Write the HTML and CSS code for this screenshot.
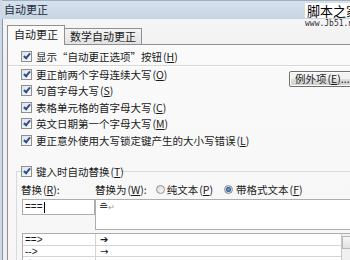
FILE: index.html
```html
<html>
	<head>
		<title>自动更正</title>
		<link rel="stylesheet" href="styles.css">
	</head>
	<body>
		<div class="frame">
			<div class="titlebar">
				<span class="title">自动更正</span>
				<div class="mark">
					<div class="mark_cn">脚本之家</div>
					<div class="mark_url">www.Jb51.net</div>
				</div>
			</div>

			<div class="client">
				<div class="tabs">
					<div class="tab active">自动更正</div>
					<div class="tab">数学自动更正</div>
				</div>

				<div class="panel">
					<div class="row first"><span class="cb"></span>显示“自动更正选项”按钮<span class="key">(<u>H</u>)</span></div>
					<div class="sep"></div>

					<div class="block">
						<div class="list">
							<div class="row"><span class="cb"></span>更正前两个字母连续大写<span class="key">(<u>O</u>)</span></div>
							<div class="row"><span class="cb"></span>句首字母大写<span class="key">(<u>S</u>)</span></div>
							<div class="row"><span class="cb"></span>表格单元格的首字母大写<span class="key">(<u>C</u>)</span></div>
							<div class="row"><span class="cb"></span>英文日期第一个字母大写<span class="key">(<u>M</u>)</span></div>
							<div class="row"><span class="cb"></span>更正意外使用大写锁定键产生的大小写错误<span class="key">(<u>L</u>)</span></div>
						</div>
						<div class="btn">例外项<span class="key">(<u>E</u>)...</span></div>
					</div>

					<div class="group">
						<div class="row legend"><span class="cb"></span>键入时自动替换<span class="key">(<u>T</u>)</span></div>

						<div class="labels">
							<span class="lab_from">替换<span class="key">(<u>R</u>)</span>:</span>
							<span>替换为<span class="key">(<u>W</u>)</span>:</span>
							<span class="radio"></span><span>纯文本<span class="key">(<u>P</u>)</span></span>
							<span class="radio on"></span><span>带格式文本<span class="key">(<u>F</u>)</span></span>
						</div>

						<div class="inputs">
							<div class="box_from">===<span class="caret"></span></div>
							<div class="box_to"><span class="sym">≘</span><span class="ret">↵</span></div>
						</div>

						<div class="table">
							<div class="cells">
								<div class="trow"><div class="c1">==&gt;</div><div class="c2 heavy">➔</div></div>
								<div class="trow"><div class="c1">--&gt;</div><div class="c2">→</div></div>
								<div class="trow"><div class="c1">&lt;--</div><div class="c2">←</div></div>
							</div>
							<div class="scroll"><div class="sbtn"></div></div>
						</div>
					</div>
				</div>
			</div>
		</div>
	</body>
</html>
```

FILE: styles.css
```css
/* dialog */
body {
	margin: 0;
	overflow: hidden;
	background-color: #f0f0f0;
	font-family: "Noto Sans CJK SC", "Liberation Sans", sans-serif;
	font-size: 10.5px;
	color: #1a1a1a;
}

.frame {
	width: 420px;
	height: 260px;
	background-color: #cdd9e5;
	padding-left: 2px;
}

.titlebar {
	position: relative;
	height: 19px;
	border-top: 1px solid #9fb0c2;
	box-sizing: border-box;
	background: linear-gradient(to bottom, #d6e1ec, #c7d5e3);
}

.title {
	display: block;
	padding-left: 2px;
	font-size: 11px;
	line-height: 17px;
	color: #1c2c3c;
}

.mark {
	position: absolute;
	left: 303px;
	top: 2px;
	z-index: 2;
}

.mark_cn {
	background-color: #ffffff;
	padding: 0 2px;
	font-size: 13px;
	line-height: 15px;
	color: #000000;
	width: 60px;
}

.mark_url {
	font-family: "DejaVu Sans Mono", monospace;
	font-size: 8px;
	line-height: 10px;
	color: #333333;
	margin-top: 1px;
}

.client {
	height: 241px;
	border-left: 1px solid #8a96a3;
	background: linear-gradient(to bottom, #f5f5f5, #f0f0f0 40px);
	padding-top: 7px;
	padding-left: 4px;
	box-sizing: border-box;
}

/* tabs */
.tabs {
	display: flex;
	align-items: flex-end;
	height: 18px;
	position: relative;
	z-index: 1;
}

.tab {
	height: 15px;
	padding: 0 5px;
	border: 1px solid #8e9297;
	border-bottom: none;
	background: linear-gradient(to bottom, #f4f4f4, #e2e2e2);
	font-size: 11px;
	line-height: 15px;
	margin-left: -1px;
	white-space: nowrap;
	color: #1a1a1a;
}

.tab.active {
	height: 19px;
	line-height: 17px;
	background: #fafafa;
	margin-left: 0;
	padding: 0 6px;
	margin-bottom: -1px;
}

.panel {
	border: 1px solid #8e9297;
	border-right: none;
	background: linear-gradient(to bottom, #fafafa, #f6f6f6);
	height: 230px;
	padding-left: 13px;
	box-sizing: border-box;
}

/* checkbox rows */
.row {
	display: flex;
	align-items: center;
	height: 16.5px;
	white-space: nowrap;
}

.row.first {
	margin-top: 3.5px;
}

.cb {
	position: relative;
	width: 9px;
	height: 9px;
	border: 1px solid #8f8f8f;
	background: linear-gradient(135deg, #dfe4ea, #f9f9f9);
	margin-right: 4px;
	flex-shrink: 0;
}

.cb::after {
	content: "";
	position: absolute;
	left: 3px;
	top: 0px;
	width: 2px;
	height: 5px;
	border-right: 2px solid #2c4f8e;
	border-bottom: 2px solid #2c4f8e;
	transform: rotate(40deg);
}

.key {
	margin-left: 1px;
}

.sep {
	height: 1px;
	border-top: 1px solid #d8d8d8;
	background-color: #ffffff;
	margin-left: -13px;
}

.block {
	display: flex;
	margin-top: -1px;
}

.list {
	width: 268px;
}

.btn {
	margin-top: 5px;
	height: 14px;
	padding: 0 5px;
	border: 1px solid #707070;
	border-radius: 2px;
	box-shadow: inset 0 0 0 1px #fcfcfc;
	background: linear-gradient(to bottom, #f2f2f2 50%, #dddddd 50%, #cfcfcf);
	line-height: 14px;
	white-space: nowrap;
}

/* replace group */
.group {
	margin-left: -5px;
	margin-top: 22.5px;
	border-top: 1px solid #d5dbe0;
	border-left: 1px solid #d5dbe0;
	padding-left: 4px;
}

.legend {
	margin-top: -8.5px;
	width: 96px;
	background-color: #f8f8f8;
	padding-right: 4px;
}

.labels {
	display: flex;
	align-items: center;
	height: 16.5px;
	margin-top: 1.5px;
	white-space: nowrap;
}

.lab_from {
	width: 74px;
}

.radio {
	width: 7px;
	height: 7px;
	border: 1px solid #8f8f8f;
	border-radius: 50%;
	background: linear-gradient(135deg, #d8dde3, #f8f8f8);
	margin-left: 9px;
	margin-right: 2px;
}

.radio.on {
	margin-left: 11px;
	margin-right: 3px;
	background: radial-gradient(circle, #7fb0d8 0, #2a5f8e 2px, #c9d4de 3px);
}

.inputs {
	display: flex;
	margin-left: 1px;
	margin-top: 1px;
}

.box_from {
	height: 14px;
	width: 69px;
	border: 1px solid #abadb3;
	background-color: #ffffff;
	font-family: "Liberation Sans", sans-serif;
	font-size: 10px;
	line-height: 14px;
	padding-left: 2px;
	display: flex;
	align-items: center;
}

.caret {
	width: 1px;
	height: 11px;
	background-color: #000000;
	margin-left: 1px;
}

.box_to {
	width: 300px;
	height: 29px;
	border: 1px solid #abadb3;
	background-color: #ffffff;
	padding-left: 3px;
	line-height: 14px;
	font-family: "DejaVu Sans", sans-serif;
	font-size: 11px;
}

.sym {
	color: #333333;
}

.ret {
	color: #9a9a9a;
	font-size: 8px;
}

.table {
	display: flex;
	margin-left: 1px;
	margin-top: 3px;
	width: 327px;
	border: 1px solid #abadb3;
	border-right: none;
	background-color: #ffffff;
}

.cells {
	flex: 1;
}

.trow {
	display: flex;
	height: 11.5px;
	border-bottom: 1px solid #d4d4d4;
	box-sizing: border-box;
	font-family: "Liberation Sans", sans-serif;
	font-size: 10px;
	line-height: 11px;
}

.c1 {
	width: 70px;
	padding-left: 2px;
	border-right: 1px solid #d4d4d4;
}

.c2 {
	padding-left: 4px;
	font-family: "DejaVu Sans", sans-serif;
}

.heavy {
	font-weight: bold;
}

.scroll {
	width: 8px;
	border-left: 1px solid #c8c8c8;
	background-color: #f0f0f0;
}

.sbtn {
	height: 11px;
	margin-top: 2px;
	border: 1px solid #b8b8b8;
	border-right: none;
	background: linear-gradient(to bottom, #f6f6f6, #e2e2e2);
}
```
